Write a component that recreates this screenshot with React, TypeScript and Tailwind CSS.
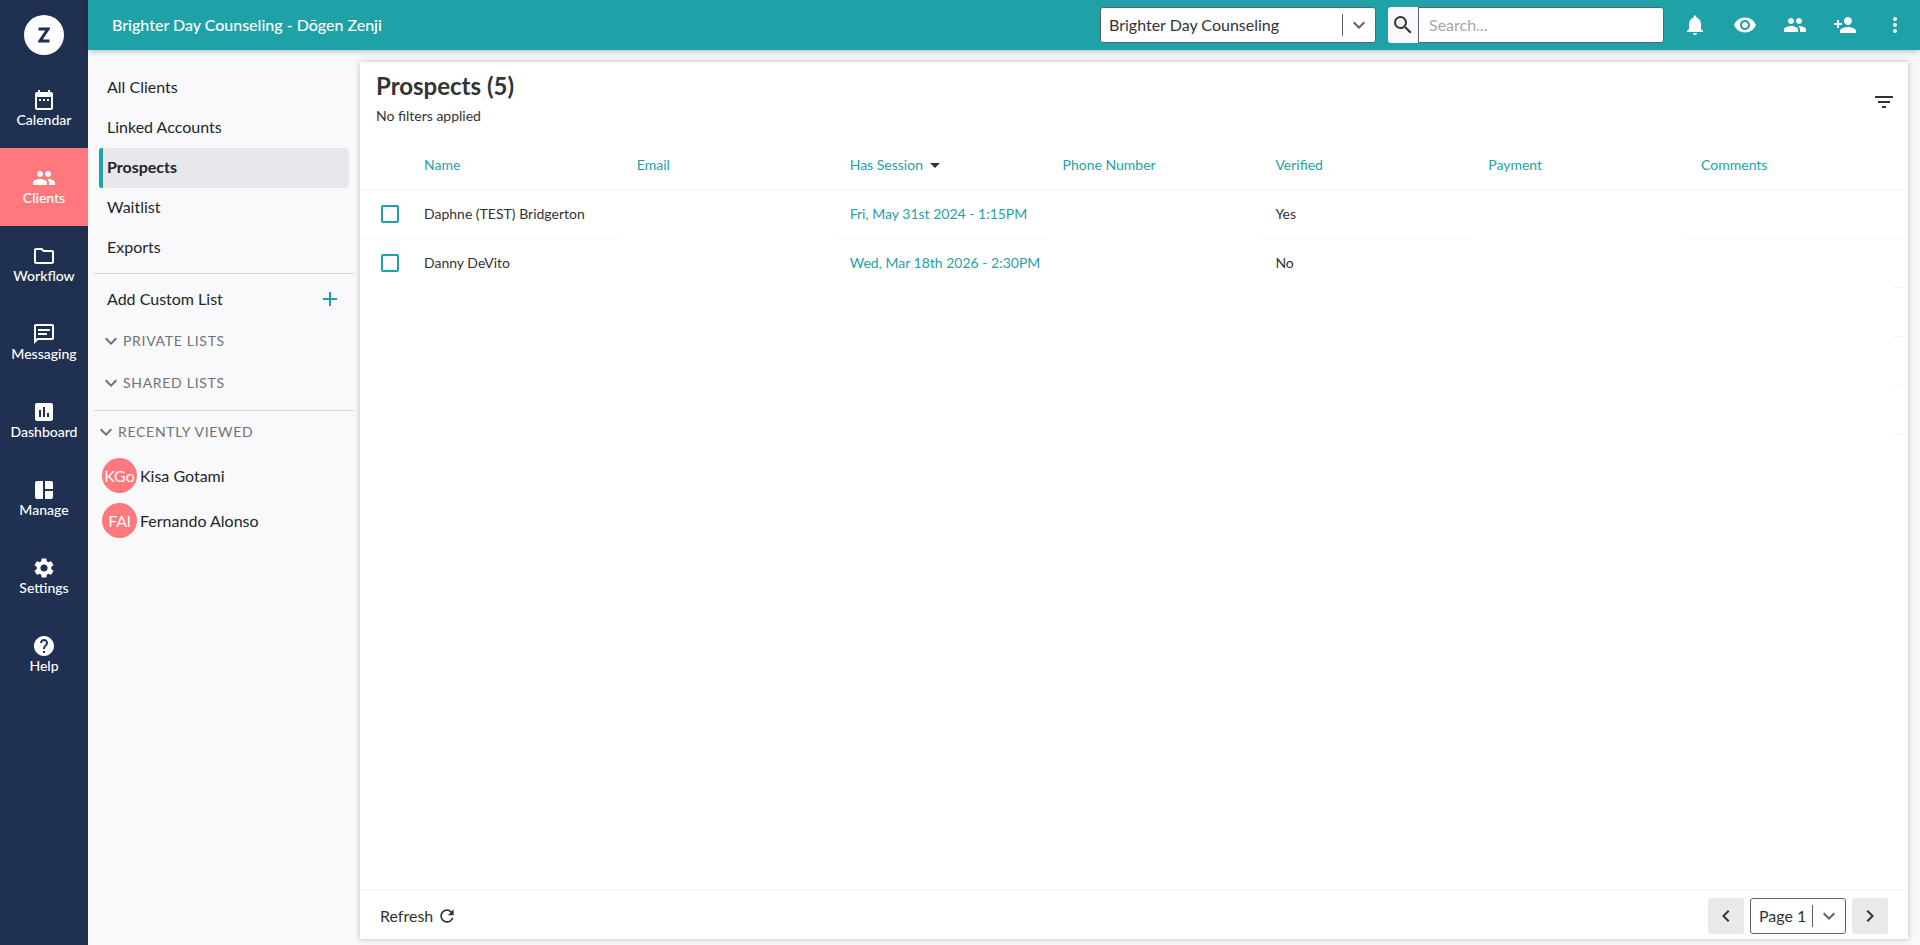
import type { ReactNode } from "react";
import clsx from "clsx";
import {
  MdAdd,
  MdArrowDropDown,
  MdAssessment,
  MdChevronLeft,
  MdChevronRight,
  MdDateRange,
  MdExpandMore,
  MdFilterList,
  MdHelp,
  MdMoreVert,
  MdNotifications,
  MdOutlineFolder,
  MdPeople,
  MdPersonAdd,
  MdRefresh,
  MdSearch,
  MdSettings,
  MdVisibility,
} from "react-icons/md";

const MessageIcon = () => (
  <svg viewBox="0 0 24 24" width="24" height="24" fill="currentColor" aria-hidden="true">
    <path d="M20 2a2 2 0 0 1 2 2v12a2 2 0 0 1-2 2H6l-4 4V4c0-1.11.9-2 2-2h16M4 4v13.17L5.17 16H20V4H4m2 3h12v2H6V7m0 4h9v2H6v-2z" />
  </svg>
);

const ManageIcon = () => (
  <svg viewBox="0 0 24 24" width="24" height="24" fill="currentColor" aria-hidden="true">
    <path d="M11 21H5a2 2 0 0 1-2-2V5a2 2 0 0 1 2-2h6v18zM13 3h6a2 2 0 0 1 2 2v6h-8V3zM13 13h8v6a2 2 0 0 1-2 2h-6v-8z" />
  </svg>
);

const mainNav = [
  { label: "Calendar", icon: <MdDateRange size={24} /> },
  { label: "Clients", icon: <MdPeople size={24} />, active: true },
  { label: "Workflow", icon: <MdOutlineFolder size={24} /> },
  { label: "Messaging", icon: <MessageIcon /> },
  { label: "Dashboard", icon: <MdAssessment size={24} /> },
  { label: "Manage", icon: <ManageIcon /> },
  { label: "Settings", icon: <MdSettings size={24} /> },
  { label: "Help", icon: <MdHelp size={24} /> },
];

const clientLists = ["All Clients", "Linked Accounts", "Prospects", "Waitlist", "Exports"];

const recentlyViewed = [
  { initials: "KGo", name: "Kisa Gotami" },
  { initials: "FAl", name: "Fernando Alonso" },
];

const headerActions = [
  { label: "Notifications", icon: <MdNotifications size={24} /> },
  { label: "View", icon: <MdVisibility size={24} /> },
  { label: "Clients", icon: <MdPeople size={24} /> },
  { label: "Add client", icon: <MdPersonAdd size={24} /> },
  { label: "More", icon: <MdMoreVert size={24} /> },
];

const columns = ["Name", "Email", "Has Session", "Phone Number", "Verified", "Payment", "Comments"];

const prospects = [
  { name: "Daphne (TEST) Bridgerton", session: "Fri, May 31st 2024 - 1:15PM", verified: "Yes", lined: true },
  { name: "Danny DeVito", session: "Wed, Mar 18th 2026 - 2:30PM", verified: "No", lined: false },
];

const emptyRows = [1, 2, 3];

function MainNav() {
  return (
    <nav aria-label="Main" className="flex w-[88px] shrink-0 flex-col bg-[#1f3050] text-white">
      <a href="#home" aria-label="Home" className="flex h-[70px] items-center justify-center">
        <span className="flex size-10 items-center justify-center rounded-full bg-white">
          <svg viewBox="0 0 12 16" width="12" height="16" fill="none" stroke="#1f3050" strokeWidth="3" aria-hidden="true">
            <path d="M0.5 2H10L2 14H11.5" />
          </svg>
        </span>
      </a>
      {mainNav.map((item) => (
        <a
          key={item.label}
          href={`#${item.label.toLowerCase()}`}
          className={clsx(
            "flex h-[78px] flex-col items-center justify-center pb-0.5 text-sm leading-4 font-medium",
            item.active && "bg-[#ff787d]"
          )}
        >
          {item.icon}
          {item.label}
        </a>
      ))}
    </nav>
  );
}

function Header() {
  return (
    <header className="z-10 flex h-[50px] shrink-0 items-center bg-[#1ea2a8] shadow-[0_1px_6px_rgba(0,0,0,0.3)]">
      <h1 className="flex-1 pl-6 text-base font-medium text-white">Brighter Day Counseling - Dōgen Zenji</h1>
      <div className="relative mr-3 w-[276px]">
        <select
          aria-label="Practice"
          className="h-9 w-full appearance-none rounded-[3px] border border-[#5b6270] bg-white pl-2 text-base text-[#333]"
        >
          <option>Brighter Day Counseling</option>
        </select>
        <span className="pointer-events-none absolute inset-y-0 right-0 flex items-center text-[#5b6270]">
          <span className="mr-1 h-[22px] w-px bg-[#5b6270]" />
          <MdExpandMore size={24} className="mr-[5px]" />
        </span>
      </div>
      <form role="search" className="mr-1.5 flex w-[276px]">
        <button
          type="button"
          aria-label="Search"
          className="flex h-9 w-[30px] items-center justify-center rounded-l-[3px] bg-[#f9f9fb] text-[#333]"
        >
          <MdSearch size={24} />
        </button>
        <input
          type="text"
          aria-label="Search"
          placeholder="Search..."
          className="h-9 min-w-0 flex-1 rounded-r-[3px] border border-[#5b6270] bg-white pb-0.5 pl-2.5 text-base placeholder:text-[#a5a5a5]"
        />
      </form>
      {headerActions.map((action) => (
        <button
          key={action.label}
          type="button"
          aria-label={action.label}
          className="flex size-[50px] items-center justify-center text-white"
        >
          {action.icon}
        </button>
      ))}
    </header>
  );
}

function SectionToggle({ children }: { children: ReactNode }) {
  return (
    <button type="button" className="flex h-[42px] items-center text-sm tracking-wider text-[#6f7277]">
      <MdExpandMore size={24} />
      {children}
    </button>
  );
}

function ClientsSidebar() {
  return (
    <aside className="flex w-[272px] shrink-0 flex-col px-1.5 pt-[18px] text-base text-[#212529]">
      <ul className="mx-[5px]">
        {clientLists.map((list) => (
          <li key={list}>
            <a
              href={`#${list.toLowerCase().replace(" ", "-")}`}
              className={clsx(
                "flex h-10 items-center rounded-[3px] border-l-4 pb-0.5 pl-1",
                list === "Prospects" ? "border-[#1ea2a8] bg-[#e8e7eb] font-bold" : "border-transparent"
              )}
            >
              {list}
            </a>
          </li>
        ))}
      </ul>
      <hr className="mt-[5px] border-[#d7d8dc]" />
      <button type="button" className="flex h-[50px] items-center justify-between pr-3 pl-[13px]">
        Add Custom List
        <MdAdd size={24} className="text-[#1ea2a8]" />
      </button>
      <div className="-mt-1 mb-1.5 flex flex-col pl-[5px]">
        <SectionToggle>PRIVATE LISTS</SectionToggle>
        <SectionToggle>SHARED LISTS</SectionToggle>
      </div>
      <hr className="border-[#d7d8dc]" />
      <SectionToggle>RECENTLY VIEWED</SectionToggle>
      <ul className="pl-2">
        {recentlyViewed.map((client) => (
          <li key={client.name}>
            <a href="#client" className="flex h-[45px] items-center gap-[3px]">
              <span className="flex size-[35px] items-center justify-center rounded-full bg-[#ff787d] text-white">
                {client.initials}
              </span>
              {client.name}
            </a>
          </li>
        ))}
      </ul>
    </aside>
  );
}

function ProspectsTable() {
  return (
    <table className="w-full table-fixed text-left text-sm text-[#333]">
      <colgroup>
        <col className="w-12" />
        {columns.map((column) => (
          <col key={column} className={column === "Comments" ? undefined : "w-[13.75%]"} />
        ))}
        <col className="w-4" />
      </colgroup>
      <thead>
        <tr className="h-[49px] border-b border-[#f6f6f7] text-[#1ea2a8]">
          <td />
          {columns.map((column) => (
            <th key={column} scope="col" className="pt-0.5 pl-4 font-normal">
              <button type="button" className="flex h-6 items-center">
                {column}
                {column === "Has Session" && <MdArrowDropDown size={24} className="text-[#333]" />}
              </button>
            </th>
          ))}
          <td />
        </tr>
      </thead>
      <tbody className="[&_.line]:border-b [&_.line]:border-[#f6f6f7]">
        {prospects.map((row) => (
          <tr key={row.name} className="h-[49px]">
            <td className={clsx("pl-[21px]", row.lined && "line")}>
              <input
                type="checkbox"
                aria-label={`Select ${row.name}`}
                className="block size-[18px] appearance-none rounded-[2px] border-2 border-[#1ea2a8]"
              />
            </td>
            <td className={clsx("truncate pl-4", row.lined && "line")}>{row.name}</td>
            <td />
            <td className={clsx("pl-4", row.lined && "line")}>
              <a href="#session" className="block overflow-hidden whitespace-nowrap text-[#1ea2a8]">
                {row.session}
              </a>
            </td>
            <td />
            <td className={clsx("pl-4", row.lined && "line")}>{row.verified}</td>
            <td />
            <td className={clsx(row.lined && "line")} />
            <td className="line" />
          </tr>
        ))}
        {emptyRows.map((row) => (
          <tr key={row} className="h-[49px]">
            <td colSpan={8} />
            <td className="line" />
          </tr>
        ))}
      </tbody>
    </table>
  );
}

function Pagination() {
  return (
    <footer className="flex h-[50px] shrink-0 items-center justify-between border-t border-[#f3f3f5] px-5 pt-0.5 text-base text-[#333]">
      <button type="button" className="flex items-center gap-1">
        Refresh
        <MdRefresh size={20} />
      </button>
      <div className="flex gap-1.5">
        <button
          type="button"
          aria-label="Previous page"
          className="flex size-9 items-center justify-center rounded-[3px] bg-[#e9e9e9]"
        >
          <MdChevronLeft size={24} />
        </button>
        <div className="relative w-24">
          <select
            aria-label="Page"
            className="h-9 w-full appearance-none rounded-[3px] border border-[#5b6270] bg-white pl-2"
          >
            <option>Page 1</option>
          </select>
          <span className="pointer-events-none absolute inset-y-0 right-0 flex items-center text-[#5b6270]">
            <span className="mr-1 h-[22px] w-px bg-[#5b6270]" />
            <MdExpandMore size={24} className="mr-[5px]" />
          </span>
        </div>
        <button
          type="button"
          aria-label="Next page"
          className="flex size-9 items-center justify-center rounded-[3px] bg-[#e9e9e9]"
        >
          <MdChevronRight size={24} />
        </button>
      </div>
    </footer>
  );
}

export default function App() {
  return (
    <div className="flex h-screen bg-[#f9f9fb] font-['Lato','Open_Sans',sans-serif]">
      <MainNav />
      <div className="flex min-w-0 flex-1 flex-col">
        <Header />
        <div className="flex min-h-0 flex-1">
          <ClientsSidebar />
          <main className="mt-3 mr-3 mb-1.5 flex min-w-0 flex-1 flex-col bg-white shadow-[0_0_6px_rgba(0,0,0,0.25)]">
            <div className="flex h-[78px] items-start justify-between pt-2 pr-3 pl-4 text-[#333]">
              <div>
                <h2 className="text-2xl leading-8 font-bold">Prospects (5)</h2>
                <p className="mt-1 text-sm leading-5">No filters applied</p>
              </div>
              <button type="button" aria-label="Filter" className="mt-5">
                <MdFilterList size={24} />
              </button>
            </div>
            <div className="min-h-0 flex-1 overflow-hidden">
              <ProspectsTable />
            </div>
            <Pagination />
          </main>
        </div>
      </div>
    </div>
  );
}
